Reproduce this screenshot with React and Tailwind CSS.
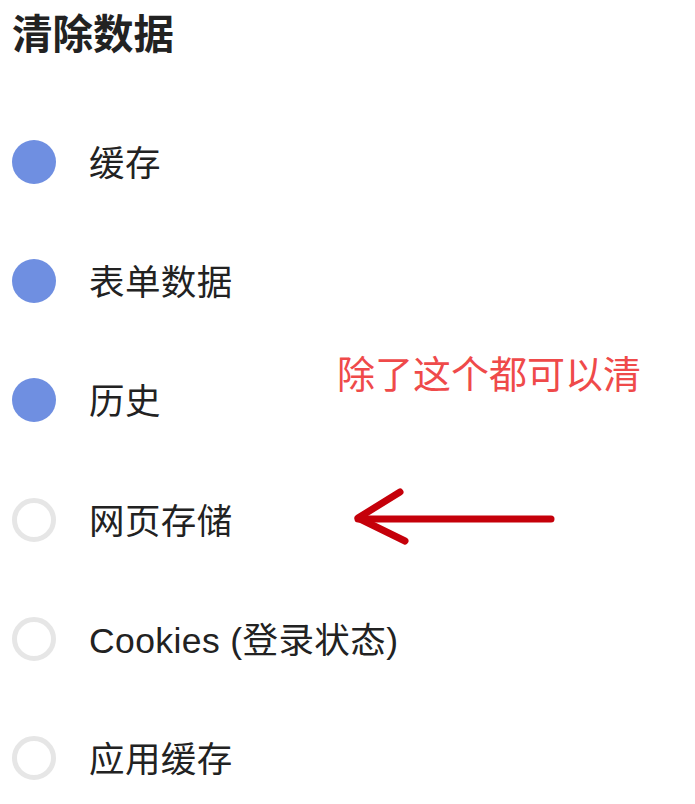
import React from "react";

const items = [
  { label: "缓存", checked: true },
  { label: "表单数据", checked: true },
  { label: "历史", checked: true },
  { label: "网页存储", checked: false },
  { label: "Cookies (登录状态)", checked: false },
  { label: "应用缓存", checked: false },
];

export default function App() {
  return (
    <div
      className="relative w-[695px] h-[804px] overflow-hidden bg-white text-[#222]"
      style={{ fontFamily: '"Liberation Sans", "Noto Sans CJK SC", sans-serif' }}
    >
      <div className="h-[102px] pl-[12px] pt-[11px]">
        <h1 className="text-[40.5px] leading-[48px] font-bold">清除数据</h1>
      </div>
      <ul className="flex flex-col">
        {items.map((it) => (
          <li key={it.label} className="flex items-center h-[119.3px] pl-[12px]">
            {it.checked ? (
              <span className="w-[44px] h-[44px] rounded-full bg-[#6f8fe1]" />
            ) : (
              <span className="w-[44px] h-[44px] rounded-full border-[5px] border-[#e6e6e6]" />
            )}
            <span className="ml-[33px] pt-[6px] text-[35.5px] leading-none tracking-[0.4px]">{it.label}</span>
          </li>
        ))}
      </ul>
      <div className="absolute left-[337px] top-[356px] text-[38px] leading-none text-[#ef4a4a]">
        除了这个都可以清
      </div>
      <svg className="absolute left-0 top-0" width="695" height="804">
        <g stroke="#c5000a" strokeWidth="7" strokeLinecap="round" fill="none">
          <path d="M358 519 L551 519" />
          <path d="M400 492 L358 518 L405 541" strokeLinejoin="round" />
        </g>
      </svg>
    </div>
  );
}
